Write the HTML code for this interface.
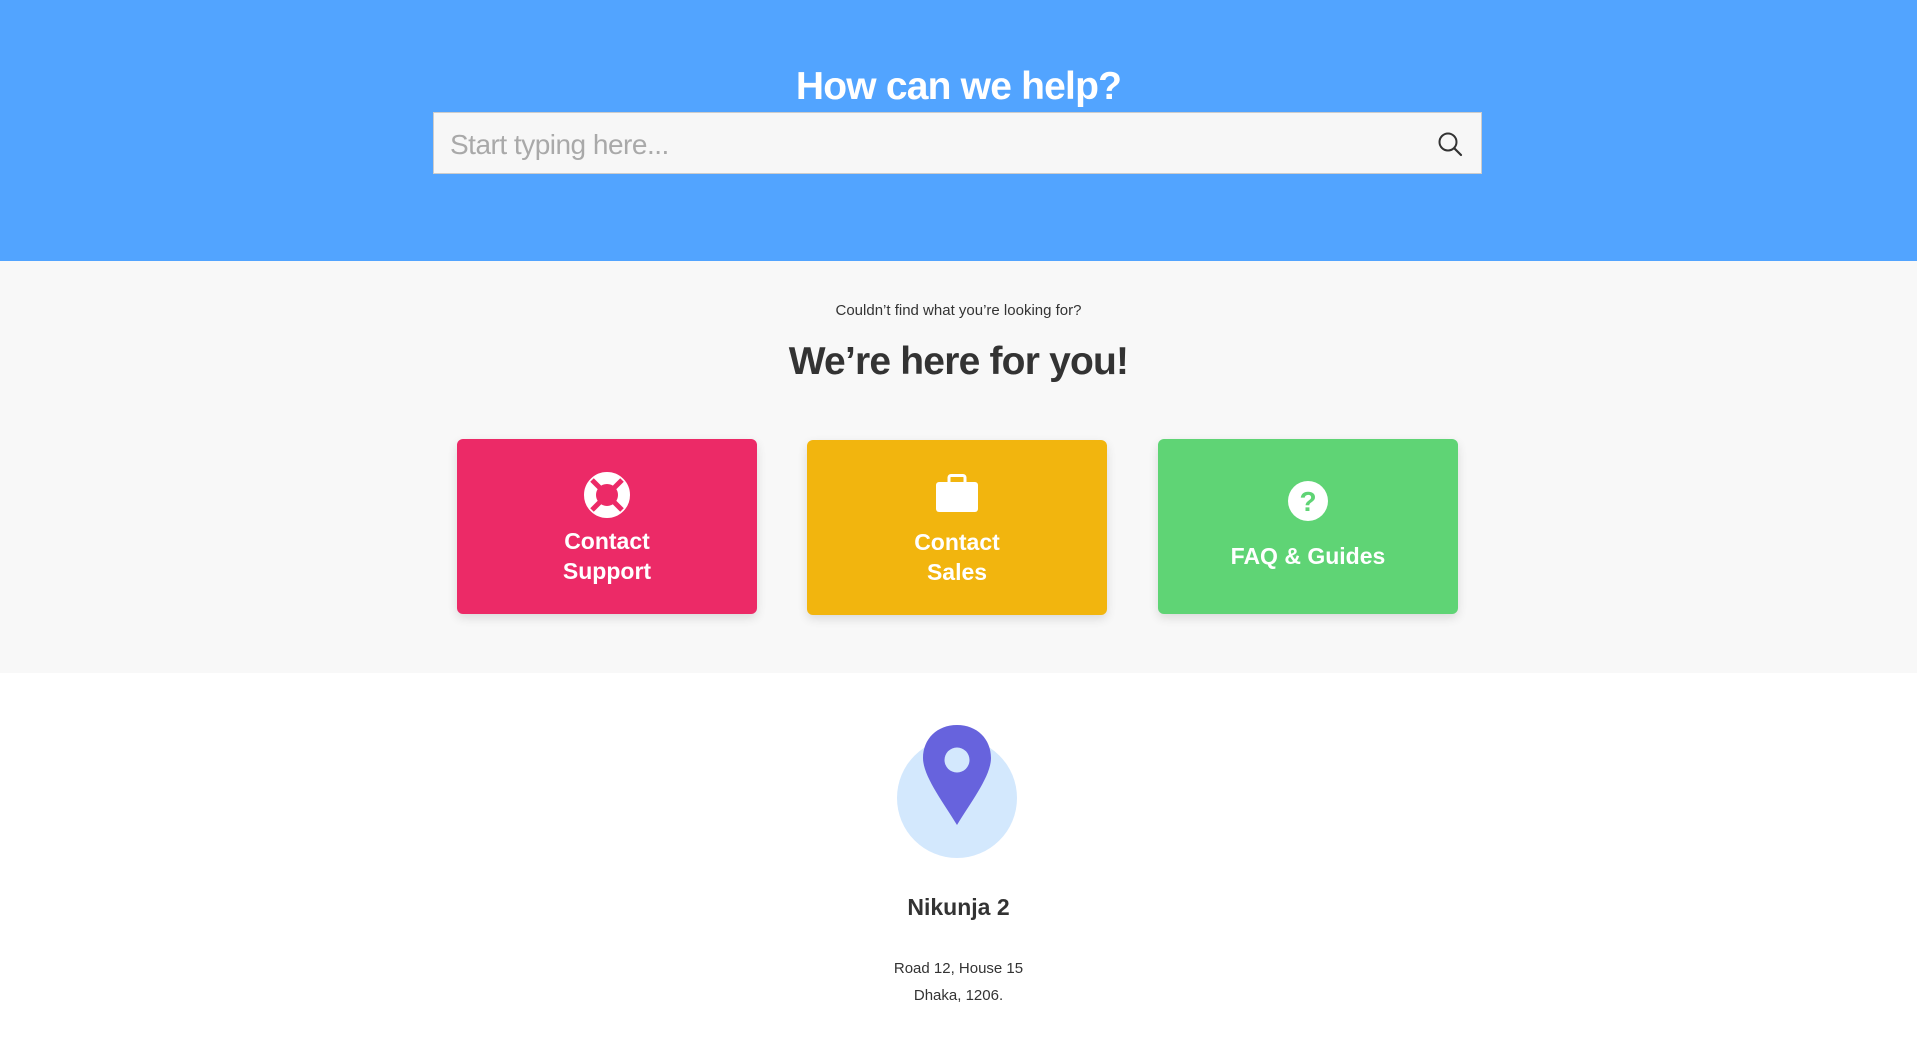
<!DOCTYPE html>
<html><head><meta charset="utf-8"><style>
*{margin:0;padding:0;box-sizing:border-box}
body{width:1917px;height:1051px;overflow:hidden;background:#fff;font-family:"Liberation Sans",sans-serif;color:#333;position:relative}
.hdr{position:absolute;left:0;top:0;width:1917px;height:261px;background:#52a4ff}
.h1{position:absolute;left:0;width:1917px;text-align:center;top:65px;font-size:39px;font-weight:bold;color:#fff;letter-spacing:-0.8px}
.search{position:absolute;left:433px;top:112px;width:1049px;height:62px;background:#f7f7f7;border:1px solid #ccc}
.search span{position:absolute;left:16px;top:16px;font-size:28px;color:#a9a9a9;letter-spacing:-0.5px}
.search svg{position:absolute;right:18px;top:18px}
.gray{position:absolute;left:0;top:261px;width:1917px;height:412px;background:#f8f8f8}
.t{position:absolute;left:0;width:1917px;text-align:center}
.card{position:absolute;width:300px;height:175px;border-radius:6px;box-shadow:0 4px 10px rgba(0,0,0,.12);color:#fff;font-weight:bold;font-size:23px;text-align:center;line-height:30px}
.card svg{position:absolute;left:50%;transform:translateX(-50%)}
.card .lbl{position:absolute;left:0;width:100%}
</style></head><body>
<div class="hdr"></div>
<div class="h1">How can we help?</div>
<div class="search"><span>Start typing here...</span>
<svg width="26" height="26" viewBox="0 0 26 26"><circle cx="11" cy="11" r="8.5" fill="none" stroke="#333" stroke-width="2"/><line x1="17.5" y1="17.5" x2="24" y2="24" stroke="#333" stroke-width="2.2" stroke-linecap="round"/></svg></div>
<div class="gray"></div>
<div class="t" style="top:302px;font-size:15px">Couldn’t find what you’re looking for?</div>
<div class="t" style="top:340px;font-size:39px;font-weight:bold;letter-spacing:-0.8px">We’re here for you!</div>

<div class="card" style="left:457px;top:439px;background:#ec2a67">
<svg style="top:32px" width="48" height="48" viewBox="0 0 48 48"><circle cx="24" cy="24" r="17" fill="none" stroke="#fff" stroke-width="12"/><g stroke="#ec2a67" stroke-width="5"><line x1="9" y1="9" x2="17" y2="17"/><line x1="39" y1="9" x2="31" y2="17"/><line x1="9" y1="39" x2="17" y2="31"/><line x1="39" y1="39" x2="31" y2="31"/></g></svg>
<div class="lbl" style="top:87px">Contact<br>Support</div></div>

<div class="card" style="left:807px;top:440px;background:#f2b50e">
<svg style="top:34px" width="42" height="38" viewBox="0 0 42 38"><rect x="13" y="1.5" width="16" height="9" rx="2" fill="none" stroke="#fff" stroke-width="3"/><rect x="0" y="8" width="42" height="30" rx="3" fill="#fff"/></svg>
<div class="lbl" style="top:87px">Contact<br>Sales</div></div>

<div class="card" style="left:1158px;top:439px;background:#5fd475">
<svg style="top:42px" width="40" height="40" viewBox="0 0 40 40"><circle cx="20" cy="20" r="20" fill="#fff"/><text x="20" y="30" text-anchor="middle" font-family="Liberation Sans" font-weight="bold" font-size="28" fill="#5fd475">?</text></svg>
<div class="lbl" style="top:102px">FAQ &amp; Guides</div></div>

<svg style="position:absolute;left:897px;top:720px" width="120" height="140" viewBox="0 0 120 140"><circle cx="60" cy="78" r="60" fill="#d3e8fd"/><path d="M60 5 C40 5 26 19 26 38 C26 56 46 82 60 105 C74 82 94 56 94 38 C94 19 80 5 60 5Z" fill="#6763dd"/><circle cx="60" cy="40" r="12.5" fill="#d3e8fd"/></svg>
<div class="t" style="top:894px;font-size:23px;font-weight:bold">Nikunja 2</div>
<div class="t" style="top:955px;font-size:15px;line-height:27px">Road 12, House 15<br>Dhaka, 1206.</div>
</body></html>
